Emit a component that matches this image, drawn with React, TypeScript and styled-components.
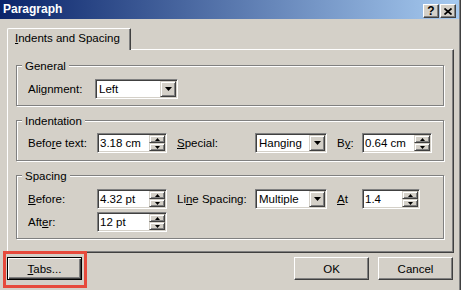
import React from 'react'
import styled, { createGlobalStyle } from 'styled-components'

const Global = createGlobalStyle`
  html, body {
    margin: 0;
    padding: 0;
    background: #d4d0c8;
  }
  body {
    font-family: "Liberation Sans", Arial, sans-serif;
    font-size: 11.5px;
    color: #000;
  }
  u {
    text-underline-offset: 1px;
  }
`

const Window = styled.div`
  width: 461px;
  height: 290px;
  box-sizing: border-box;
  background: #d4d0c8;
  border-right: 1px solid #404040;
  box-shadow: inset -1px 0 0 #808080;
  display: flex;
  flex-direction: column;
  overflow: hidden;
`

const TitleBar = styled.div`
  height: 19px;
  flex: none;
  display: flex;
  justify-content: space-between;
  padding: 0 3px 0 3px;
  margin-right: 1px;
  background: linear-gradient(to right, #0a246a, #a6caf0);
  color: #fff;
  font-weight: bold;
  font-size: 12px;
  line-height: 19px;
`

const TitleButtons = styled.div`
  display: flex;
  gap: 1px;
  margin-top: 4px;
`

const TitleButton = styled.div`
  width: 16px;
  height: 14px;
  box-sizing: border-box;
  background: #d4d0c8;
  border-top: 1px solid #fff;
  border-left: 1px solid #fff;
  border-right: 1px solid #404040;
  border-bottom: 1px solid #404040;
  box-shadow: inset -1px -1px 0 #808080;
  display: flex;
  align-items: center;
  justify-content: center;
  color: #000;
  font-size: 12px;
  line-height: 12px;
`

const Body = styled.div`
  flex: 1;
  padding: 9px 6px 0 7px;
  display: flex;
  flex-direction: column;
`

const TabStrip = styled.div`
  display: flex;
  height: 21px;
`

const Tab = styled.div`
  position: relative;
  z-index: 1;
  width: 124px;
  height: 22px;
  box-sizing: border-box;
  padding-left: 7px;
  background: #d4d0c8;
  border-top: 1px solid #fff;
  border-left: 1px solid #fff;
  border-right: 1px solid #404040;
  border-top-left-radius: 2px;
  border-top-right-radius: 1px;
  box-shadow: inset -1px 0 0 #808080;
  line-height: 19px;
`

const Panel = styled.div`
  box-sizing: border-box;
  height: 204px;
  border-top: 1px solid #fff;
  border-left: 1px solid #fff;
  border-right: 1px solid #404040;
  border-bottom: 1px solid #404040;
  box-shadow: inset -1px -1px 0 #808080;
  padding: 15px 9px 0 8px;
  display: flex;
  flex-direction: column;
  gap: 14px;
`

const Group = styled.div<{ $pt: number; $pb: number }>`
  position: relative;
  border: 1px solid #808080;
  box-shadow: 1px 1px 0 #fff, inset 1px 1px 0 #fff;
  padding: ${p => p.$pt}px 0 ${p => p.$pb}px 11px;
  display: flex;
  flex-direction: column;
  gap: 3px;
`

const Legend = styled.span`
  position: absolute;
  top: -7px;
  left: 5px;
  padding: 0 3px;
  background: #d4d0c8;
  line-height: 14px;
`

const Row = styled.div`
  display: flex;
  align-items: center;
  height: 20px;
`

const Label = styled.span<{ $w: number; $ml?: number }>`
  width: ${p => p.$w}px;
  margin-left: ${p => p.$ml ?? 0}px;
  flex: none;
  white-space: nowrap;
`

const Sunken = styled.div<{ $w: number }>`
  width: ${p => p.$w}px;
  height: 20px;
  box-sizing: border-box;
  flex: none;
  display: flex;
  background: #fff;
  border-top: 1px solid #808080;
  border-left: 1px solid #808080;
  border-bottom: 1px solid #fff;
  border-right: 1px solid #fff;
  box-shadow: inset 1px 1px 0 #404040, inset -1px -1px 0 #d4d0c8;
  padding: 1px;
`

const FieldText = styled.span<{ $pl: number }>`
  flex: 1;
  padding-left: ${p => p.$pl}px;
  line-height: 16px;
  white-space: nowrap;
  overflow: hidden;
`

const Raised = styled.div`
  box-sizing: border-box;
  background: #d4d0c8;
  border-top: 1px solid #d4d0c8;
  border-left: 1px solid #d4d0c8;
  border-right: 1px solid #404040;
  border-bottom: 1px solid #404040;
  box-shadow: inset 1px 1px 0 #fff, inset -1px -1px 0 #808080;
  display: flex;
  align-items: center;
  justify-content: center;
`

const DropButton = styled(Raised)`
  width: 16px;
  height: 16px;
`

const SpinColumn = styled.div`
  width: 16px;
  display: flex;
  flex-direction: column;
`

const SpinButton = styled(Raised)`
  height: 8px;
`

const Footer = styled.div`
  display: flex;
  margin-top: 4px;
  padding-right: 1px;
`

const Button = styled.div<{ $default?: boolean }>`
  position: relative;
  width: 75px;
  height: 23px;
  box-sizing: border-box;
  background: #d4d0c8;
  display: flex;
  align-items: center;
  justify-content: center;
  border: 1px solid ${p => (p.$default ? '#000' : '#fff')};
  border-right-color: ${p => (p.$default ? '#000' : '#404040')};
  border-bottom-color: ${p => (p.$default ? '#000' : '#404040')};
  box-shadow: ${p =>
    p.$default
      ? 'inset 1px 1px 0 #fff, inset -1px -1px 0 #404040, inset -2px -2px 0 #808080'
      : 'inset -1px -1px 0 #808080'};
`

const Spacer = styled.div`
  flex: 1;
`

const ButtonGap = styled.div`
  width: 9px;
`

const Highlight = styled.span`
  position: absolute;
  top: -7px;
  left: -5px;
  right: -6px;
  bottom: -9px;
  border: 3px solid #e64a3c;
  pointer-events: none;
`

const DownArrow = () => (
  <svg width="7" height="4" viewBox="0 0 7 4">
    <polygon points="0,0 7,0 3.5,4" fill="#000" />
  </svg>
)

const TinyArrow = ({ up }: { up?: boolean }) => (
  <svg width="5" height="3" viewBox="0 0 5 3">
    <polygon points={up ? '0,3 5,3 2.5,0' : '0,0 5,0 2.5,3'} fill="#000" />
  </svg>
)

const Select = ({ w, value }: { w: number; value: string }) => (
  <Sunken $w={w}>
    <FieldText $pl={2}>{value}</FieldText>
    <DropButton>
      <DownArrow />
    </DropButton>
  </Sunken>
)

const Spin = ({ w, value }: { w: number; value: string }) => (
  <Sunken $w={w}>
    <FieldText $pl={1}>{value}</FieldText>
    <SpinColumn>
      <SpinButton>
        <TinyArrow up />
      </SpinButton>
      <SpinButton>
        <TinyArrow />
      </SpinButton>
    </SpinColumn>
  </Sunken>
)

export default function App() {
  return (
    <>
      <Global />
      <Window>
        <TitleBar>
          <span>Paragraph</span>
          <TitleButtons>
            <TitleButton style={{ fontWeight: 'bold' }}>?</TitleButton>
            <TitleButton>
              <svg width="8" height="7" viewBox="0 0 8 7">
                <path d="M0.5 0.5 L7.5 6.5 M7.5 0.5 L0.5 6.5" stroke="#000" strokeWidth="1.7" />
              </svg>
            </TitleButton>
          </TitleButtons>
        </TitleBar>
        <Body>
          <TabStrip>
            <Tab>
              <u>I</u>ndents and Spacing
            </Tab>
          </TabStrip>
          <Panel>
            <Group $pt={13} $pb={6}>
              <Legend>General</Legend>
              <Row>
                <Label $w={67}>
                  Ali<u>g</u>nment:
                </Label>
                <Select w={83} value="Left" />
              </Row>
            </Group>
            <Group $pt={12} $pb={7}>
              <Legend>Indentation</Legend>
              <Row>
                <Label $w={69}>
                  Befo<u>r</u>e text:
                </Label>
                <Spin w={70} value="3.18 cm" />
                <Label $w={78} $ml={10}>
                  <u>S</u>pecial:
                </Label>
                <Select w={72} value="Hanging" />
                <Label $w={25} $ml={10}>
                  B<u>y</u>:
                </Label>
                <Spin w={70} value="0.64 cm" />
              </Row>
            </Group>
            <Group $pt={13} $pb={6}>
              <Legend>Spacing</Legend>
              <Row>
                <Label $w={69}>
                  <u>B</u>efore:
                </Label>
                <Spin w={70} value="4.32 pt" />
                <Label $w={78} $ml={10}>
                  Li<u>n</u>e Spacing:
                </Label>
                <Select w={72} value="Multiple" />
                <Label $w={25} $ml={10}>
                  <u>A</u>t
                </Label>
                <Spin w={58} value="1.4" />
              </Row>
              <Row>
                <Label $w={69}>
                  Aft<u>e</u>r:
                </Label>
                <Spin w={70} value="12 pt" />
              </Row>
            </Group>
          </Panel>
          <Footer>
            <Button $default>
              <span>
                <u>T</u>abs...
              </span>
              <Highlight />
            </Button>
            <Spacer />
            <Button>OK</Button>
            <ButtonGap />
            <Button>Cancel</Button>
          </Footer>
        </Body>
      </Window>
    </>
  )
}
